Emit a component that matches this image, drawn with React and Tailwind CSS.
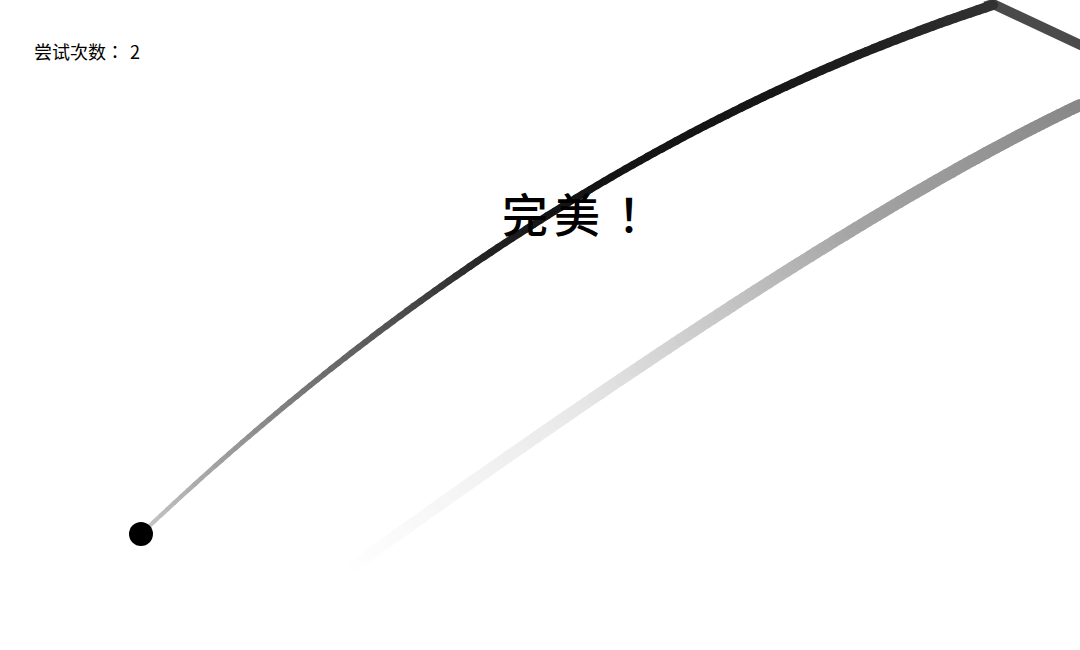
import React from "react";

function lerp(a, b, t) {
  return a + (b - a) * t;
}
function interp(stops, t) {
  for (let i = 0; i < stops.length - 1; i++) {
    const [t0, v0] = stops[i];
    const [t1, v1] = stops[i + 1];
    if (t >= t0 && t <= t1) return lerp(v0, v1, (t - t0) / (t1 - t0));
  }
  return stops[stops.length - 1][1];
}
function bez(p0, p1, p2, t) {
  const u = 1 - t;
  return [
    u * u * p0[0] + 2 * u * t * p1[0] + t * t * p2[0],
    u * u * p0[1] + 2 * u * t * p1[1] + t * t * p2[1],
  ];
}
function segments(p0, p1, p2, n, grayStops, widthStops) {
  const out = [];
  for (let i = 0; i < n; i++) {
    const ta = i / n;
    const tb = (i + 1) / n;
    const a = bez(p0, p1, p2, ta);
    const b = bez(p0, p1, p2, tb);
    const tm = (ta + tb) / 2;
    const g = Math.round(interp(grayStops, tm));
    out.push({
      x1: a[0],
      y1: a[1],
      x2: b[0],
      y2: b[1],
      color: `rgb(${g},${g},${g})`,
      w: interp(widthStops, tm),
    });
  }
  return out;
}

const curve1 = segments(
  [141, 534],
  [542, 153],
  [993, 5],
  120,
  [
    [0, 200],
    [0.2, 119],
    [0.3, 85],
    [0.42, 36],
    [0.5, 20],
    [0.75, 22],
    [0.9, 36],
    [1, 50],
  ],
  [
    [0, 4],
    [0.2, 5.5],
    [0.4, 7],
    [0.6, 7.5],
    [0.85, 9],
    [1, 10],
  ]
);

const curve2 = segments(
  [355, 565],
  [832, 222],
  [1080, 105],
  120,
  [
    [0, 254],
    [0.1, 246],
    [0.25, 232],
    [0.31, 221],
    [0.62, 164],
    [1, 136],
  ],
  [
    [0, 12],
    [1, 12],
  ]
);

const cjk = { fontFamily: '"Noto Sans CJK TC", "Noto Sans CJK SC", sans-serif' };

export default function App() {
  return (
    <div className="relative w-[1080px] h-[650px] overflow-hidden bg-white">
      <svg
        className="absolute inset-0"
        width="1080"
        height="650"
        viewBox="0 0 1080 650"
      >
        {curve2.map((s, i) => (
          <line
            key={"b" + i}
            x1={s.x1}
            y1={s.y1}
            x2={s.x2}
            y2={s.y2}
            stroke={s.color}
            strokeWidth={s.w}
            strokeLinecap="round"
          />
        ))}
        <polyline
          points="985,6.5 993,4 1085,47"
          fill="none"
          stroke="#4a4a4a"
          strokeWidth="10"
          strokeLinejoin="miter"
        />
        {curve1.map((s, i) => (
          <line
            key={"a" + i}
            x1={s.x1}
            y1={s.y1}
            x2={s.x2}
            y2={s.y2}
            stroke={s.color}
            strokeWidth={s.w}
            strokeLinecap="round"
          />
        ))}
        <circle cx="141" cy="534" r="12" fill="#000" />
      </svg>

      <div
        className="absolute left-[34px] top-[42px] text-[18px] leading-none font-normal text-black"
        style={cjk}
      >
        尝试次数：<span className="ml-[6px]">2</span>
      </div>

      <div
        className="absolute left-[502px] top-[189px] text-[46px] leading-none font-medium tracking-[6px] text-black"
        style={cjk}
      >
        完美！
      </div>
    </div>
  );
}
